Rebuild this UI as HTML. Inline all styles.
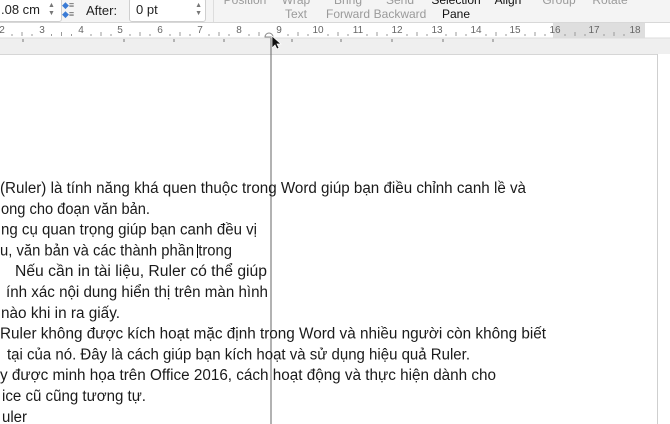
<!DOCTYPE html>
<html><head><meta charset="utf-8"><style>
*{margin:0;padding:0}
body{width:670px;height:424px;overflow:hidden;background:#fff;position:relative;font-family:"Liberation Sans",sans-serif}
.tb{position:absolute;left:0;top:0;width:670px;height:22px;background:#f4f4f4;border-bottom:1px solid #d8d8d8}
.lab{position:absolute;font-size:12px;color:#9a9a9a;text-align:center;line-height:14px}
.box{position:absolute;background:#fff;border:1px solid #cfcfcf;border-radius:3px;font-size:13px;color:#222}
</style></head><body>
<div class="tb">
 <div class="box" style="left:-4px;top:-2px;width:64px;height:22px"><span style="position:absolute;left:4px;top:3px">.08 cm</span></div>
 <div style="position:absolute;left:48px;top:2px;font-size:7px;color:#777;line-height:8px">▲<br>▼</div>
 <div style="position:absolute;left:62px;top:1px;font-size:9px;color:#3a7bd5;line-height:9px">◆<span style="color:#666">≡</span><br>◆<span style="color:#666">≡</span></div>
 <div style="position:absolute;left:86px;top:3px;font-size:13px;color:#222">After:</div>
 <div class="box" style="left:129px;top:-2px;width:75px;height:22px"><span style="position:absolute;left:6px;top:3px">0 pt</span><span style="position:absolute;right:3px;top:3px;font-size:7px;color:#777;line-height:8px">▲<br>▼</span></div>
 <div style="position:absolute;left:213px;top:0;width:1px;height:22px;background:#ddd"></div>
 <div class="lab" style="left:217px;top:-7px;width:56px">Position</div>
 <div class="lab" style="left:274px;top:-7px;width:44px">Wrap<br>Text</div>
 <div class="lab" style="left:320px;top:-7px;width:56px">Bring<br>Forward</div>
 <div class="lab" style="left:369px;top:-7px;width:62px">Send<br>Backward</div>
 <div class="lab" style="left:425px;top:-7px;width:62px;color:#111">Selection<br>Pane</div>
 <div class="lab" style="left:488px;top:-7px;width:40px;color:#111">Align</div>
 <div class="lab" style="left:536px;top:-7px;width:46px">Group</div>
 <div class="lab" style="left:588px;top:-7px;width:44px">Rotate</div>
</div>
<svg style="position:absolute;left:0;top:23px" width="670" height="401">
 <rect x="0" y="0" width="670" height="15" fill="#fff"/>
 <rect x="553" y="0" width="92" height="15" fill="#dedede"/>
 <rect x="0" y="15" width="670" height="16" fill="#efefef"/>
 <line x1="0" y1="15" x2="670" y2="15" stroke="#dcdcdc"/>
 <rect x="0" y="31" width="657" height="370" fill="#fff"/>
 <line x1="0" y1="31.5" x2="657" y2="31.5" stroke="#d6d6d6"/>
 <line x1="657.5" y1="31" x2="657.5" y2="401" stroke="#cfcfcf"/>
 <g font-size="10" fill="#666" text-anchor="middle">
  <text x="2" y="10">2</text><text x="42" y="10">3</text><text x="81" y="10">4</text><text x="120" y="10">5</text><text x="160" y="10">6</text><text x="200" y="10">7</text><text x="239" y="10">8</text><text x="279" y="10">9</text><text x="318" y="10">10</text><text x="358" y="10">11</text><text x="397" y="10">12</text><text x="437" y="10">13</text><text x="476" y="10">14</text><text x="515" y="10">15</text><text x="555" y="10">16</text><text x="594" y="10">17</text><text x="635" y="10">18</text>
 </g>
 <g stroke="#999" stroke-width="1">
  <path d="M12 11v2M22 9v4M32 11v2M51.5 11v2M61.5 9v4M71.5 11v2M91 11v2M101 9v4M111 11v2M130 11v2M140 9v4M150 11v2M170 11v2M180 9v4M190 11v2M209 11v2M219 9v4M229 11v2M249 11v2M259 9v4M288 11v2M298 9v4M308 11v2M328 11v2M338 9v4M348 11v2M367 11v2M377 9v4M387 11v2M407 11v2M417 9v4M427 11v2M446 11v2M456 9v4M466 11v2M486 11v2M496 9v4M506 11v2M525 11v2M535 9v4M545 11v2M565 11v2M575 9v4M585 11v2M604 11v2M614 9v4M624 11v2"/>
  <path d="M23 16v3M124 16v3M174 16v3M224 16v3M292 16v3M341 16v3M392 16v3M443 16v3M493 16v3" stroke="#777"/>
 </g>
 <path d="M265 14a4 4 0 0 1 8 0z" fill="#fff" stroke="#888"/>
 <line x1="271" y1="15" x2="271" y2="401" stroke="#666"/>
 <path d="M272 13v12l3-3 2 4 2-1-2-4h4z" fill="#111" stroke="#fff" stroke-width="0.7"/>
 <g font-size="15.5" fill="#1a1a1a">
  <text x="0" y="170" textLength="526" lengthAdjust="spacingAndGlyphs">(Ruler) là tính năng khá quen thuộc trong Word giúp bạn điều chỉnh canh lề và</text>
  <text x="1" y="190.8" textLength="149" lengthAdjust="spacingAndGlyphs">ong cho đoạn văn bản.</text>
  <text x="1" y="211.6" textLength="256" lengthAdjust="spacingAndGlyphs">ng cụ quan trọng giúp bạn canh đều vị</text>
  <text x="0" y="232.4" textLength="232" lengthAdjust="spacingAndGlyphs">u, văn bản và các thành phần trong</text>
  <text x="15" y="253.2" textLength="252" lengthAdjust="spacingAndGlyphs">Nếu cần in tài liệu, Ruler có thể giúp</text>
  <text x="6" y="274" textLength="262" lengthAdjust="spacingAndGlyphs">ính xác nội dung hiển thị trên màn hình</text>
  <text x="1" y="294.8" textLength="119" lengthAdjust="spacingAndGlyphs">nào khi in ra giấy.</text>
  <text x="0" y="315.6" textLength="546" lengthAdjust="spacingAndGlyphs">Ruler không được kích hoạt mặc định trong Word và nhiều người còn không biết</text>
  <text x="7" y="336.4" textLength="463" lengthAdjust="spacingAndGlyphs">tại của nó. Đây là cách giúp bạn kích hoạt và sử dụng hiệu quả Ruler.</text>
  <text x="0" y="357.2" textLength="496" lengthAdjust="spacingAndGlyphs">y được minh họa trên Office 2016, cách hoạt động và thực hiện dành cho</text>
  <text x="2" y="378" textLength="144" lengthAdjust="spacingAndGlyphs">ice cũ cũng tương tự.</text>
  <text x="2" y="398.8" textLength="25" lengthAdjust="spacingAndGlyphs">uler</text>
 </g>
 <line x1="197.5" y1="221" x2="197.5" y2="235" stroke="#000"/>
</svg>
</body></html>
